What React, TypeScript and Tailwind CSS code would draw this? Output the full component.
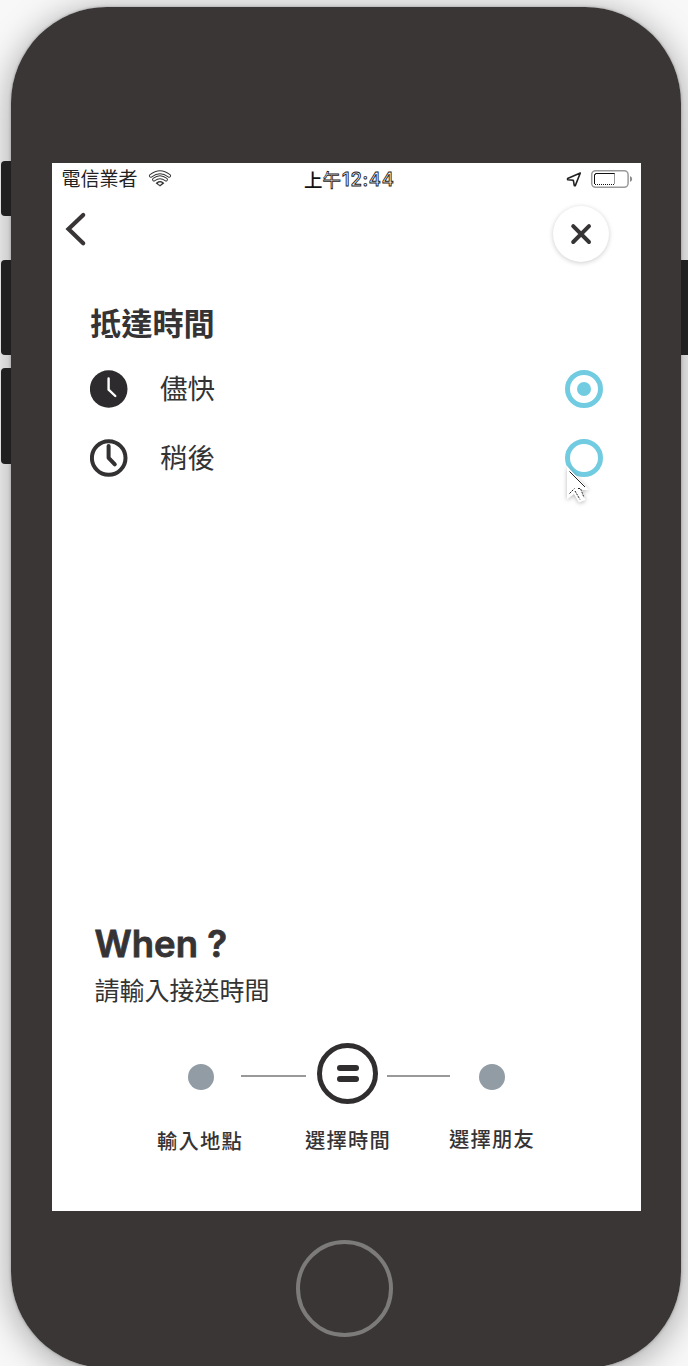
import React from "react";

const keys = [
  "left-[1px] top-[161px] h-[55px] w-[14px] rounded-l-[4px]",
  "left-[1px] top-[260px] h-[95px] w-[14px] rounded-l-[4px]",
  "left-[1px] top-[368px] h-[96px] w-[14px] rounded-l-[4px]",
  "left-[679px] top-[260px] h-[95px] w-[14px] rounded-r-[4px]",
];

function WifiIcon() {
  return (
    <svg className="ml-[10px] h-[18px] w-[24px]" viewBox="0 0 24 18" fill="none" strokeLinecap="round">
      <g stroke="#333" strokeWidth="3.8">
        <path d="M2.9 5.8Q12 -1.4 21.1 5.8" />
        <path d="M6 9.6Q12 5 18 9.6" />
        <path d="M9.4 13.2Q12 11 14.6 13.2L12 15.2Z" strokeWidth="2.2" />
      </g>
      <g stroke="#fff" strokeWidth="1.9">
        <path d="M2.9 5.8Q12 -1.4 21.1 5.8" />
        <path d="M6 9.6Q12 5 18 9.6" />
        <path d="M10.4 13.2Q12 12.2 13.6 13.2L12 14.5Z" strokeWidth="0.8" fill="#fff" />
      </g>
    </svg>
  );
}

function StatusBar() {
  return (
    <div className="flex h-[32px] shrink-0 items-center">
      <div className="flex w-[252px] items-center pl-[9.5px] text-[19px] leading-[32px] text-[#222]">
        <span className="relative -top-px whitespace-nowrap">電信業者</span>
        <WifiIcon />
      </div>
      <div className="flex w-[262px] text-[18.5px] leading-[31px] text-[#111]">
        <span className="font-medium">上</span>
        <span className="text-white [-webkit-text-stroke:0.8px_#222]">午</span>
        <span className="ml-[1px] font-['Inter','Noto_Sans_CJK_TC',sans-serif] font-medium tracking-[0.7px] text-white [-webkit-text-stroke:0.9px_#222]">
          12:44
        </span>
      </div>
      <svg className="h-[18px] w-[18px]" viewBox="0 0 18 18" fill="none" stroke="#222" strokeWidth="1.6" strokeLinejoin="round">
        <path d="M14.3 3L1.6 8.6L1.6 9.7L7.3 10.2L8.3 15.6L9.3 15.6Z" />
      </svg>
      <svg className="ml-[6px] h-[20px] w-[44px]" viewBox="0 0 44 20" fill="none">
        <rect x="1.7" y="1.7" width="36.4" height="16.6" rx="4" stroke="#999" strokeWidth="1.5" />
        <path d="M40 7Q42.2 8 42.2 10T40 13Z" fill="#8b8b8b" />
        <path d="M4.5 15V5.5H5.5V4.5H25" stroke="#111" />
        <path d="M24.5 4.5V15" stroke="#999" />
        <path d="M5 15.5H25" stroke="#111" strokeDasharray="1 1" />
      </svg>
    </div>
  );
}

function NavBar() {
  return (
    <div className="flex h-[78px] shrink-0 items-start justify-between pl-[11px] pr-[32px]">
      <svg className="mt-[15px] h-[38px] w-[25px]" viewBox="0 0 25 38" fill="none" stroke="#393536" strokeWidth="4.2" strokeLinecap="round" strokeLinejoin="miter">
        <path d="M20.2 5L5.5 19L20.2 33.2" />
      </svg>
      <button className="mt-[11px] flex h-[56px] w-[56px] items-center justify-center rounded-full bg-white shadow-[0_1px_5px_rgba(0,0,0,0.2)]">
        <svg className="h-[24px] w-[24px]" viewBox="0 0 24 24" fill="none" stroke="#363435" strokeWidth="4" strokeLinecap="round">
          <path d="M4.2 4.2L20 20M20 4.2L4.2 20" />
        </svg>
      </button>
    </div>
  );
}

function ClockIcon({ filled }: { filled: boolean }) {
  return (
    <svg className="h-[38px] w-[38px] shrink-0" viewBox="0 0 38 38" fill="none" strokeLinecap="round" strokeLinejoin="round">
      {filled ? (
        <>
          <circle cx="18.7" cy="19" r="18.8" fill="#2d2b2d" />
          <path d="M18.6 8.5V19.7L25.3 26" stroke="#fff" strokeWidth="2.4" />
        </>
      ) : (
        <>
          <circle cx="18.7" cy="19" r="16.8" stroke="#333132" strokeWidth="4" />
          <path d="M18.6 7V18.8L24.8 25.3" stroke="#333132" strokeWidth="4" />
        </>
      )}
    </svg>
  );
}

function Option({ label, selected }: { label: string; selected: boolean }) {
  return (
    <div className="flex h-[69px] items-center">
      <ClockIcon filled={selected} />
      <span className="mb-[4px] ml-[32px] flex-1 text-[27.5px] leading-[40px] text-[#333]">{label}</span>
      <span className="flex h-[38px] w-[38px] items-center justify-center rounded-full border-[5px] border-[#72cce1]">
        {selected && <span className="h-[14px] w-[14px] rounded-full bg-[#72cce1]" />}
      </span>
    </div>
  );
}

function Cursor() {
  return (
    <svg className="absolute left-[509px] top-[300px] h-[50px] w-[36px]" viewBox="0 0 36 50" fill="none">
      <path
        className="drop-shadow-[0_1px_2px_rgba(0,0,0,0.28)]"
        d="M6 3V36.5L13 31L18 39.5L24.5 37L21 27H28Z"
        fill="#fff"
      />
      <path d="M8.5 8.5L24 24" stroke="#222" />
      <path d="M8.5 30.5L13.5 25.5M14 28L19 36.5M17 25.5H19.5L23 34.5" stroke="#222" strokeDasharray="2 1" />
    </svg>
  );
}

function Progress() {
  return (
    <div className="mt-[34px] flex h-[64px] items-center pl-[136px]">
      <span className="mt-[5px] h-[26px] w-[26px] rounded-full bg-[#919ca5]" />
      <span className="ml-[27px] mt-[3px] h-[2px] w-[65px] bg-[#999]" />
      <span className="ml-[11px] mb-px flex h-[61px] w-[61px] flex-col items-center justify-center gap-[5px] rounded-full border-[5.5px] border-[#302e2f]">
        <span className="h-[6px] w-[22px] rounded-full bg-[#302e2f]" />
        <span className="h-[6px] w-[22px] rounded-full bg-[#302e2f]" />
      </span>
      <span className="ml-[9px] mt-[3px] h-[2px] w-[63px] bg-[#999]" />
      <span className="ml-[29px] mt-[5px] h-[26px] w-[26px] rounded-full bg-[#919ca5]" />
    </div>
  );
}

export default function App() {
  return (
    <main className="relative h-[1366px] w-[688px] overflow-hidden bg-[#f8f8f8] font-['Noto_Sans_CJK_TC',sans-serif]">
      {keys.map((place) => (
        <span key={place} className={`absolute z-10 bg-[#202020] ${place}`} />
      ))}
      <div className="relative ml-[11px] mt-[7px] w-[670px]">
        <div className="absolute inset-0 rounded-[96px] shadow-[0_0_3px_rgba(0,0,0,0.3),0_5px_36px_rgba(0,0,0,0.36)]" />
        <div className="relative z-20 flex h-[1361px] w-[670px] flex-col items-center rounded-[96px] bg-[#3a3636] pt-[156px]">
          <div className="relative flex h-[1048px] w-[589px] shrink-0 flex-col self-start overflow-hidden bg-white ml-[41px]">
            <StatusBar />
            <NavBar />
            <section className="pl-[38px] pr-[38px]">
              <h1 className="mt-[27px] h-[54px] text-[31.2px] font-bold leading-[44px] text-[#363334]">抵達時間</h1>
              <Option label="儘快" selected />
              <Option label="稍後" selected={false} />
            </section>
            <section className="mt-auto h-[295px] shrink-0">
              <h2 className="pl-[42.5px] font-['Inter',sans-serif] text-[36.5px] font-semibold leading-[56px] text-[#363334] [-webkit-text-stroke:0.8px_#363334] [stroke-linejoin:round]">
                When ?
              </h2>
              <p className="-mt-px h-[37px] pl-[42.5px] text-[25px] leading-[36px] text-[#333]">請輸入接送時間</p>
              <Progress />
              <div className="mt-[17px] flex pl-[105px] text-[20.3px] font-medium leading-[30px] tracking-[1.2px] text-[#363334]">
                <span className="mt-[2px] w-[148px]">輸入地點</span>
                <span className="mt-px w-[144px]">選擇時間</span>
                <span>選擇朋友</span>
              </div>
            </section>
            <Cursor />
          </div>
          <div className="ml-[-3px] mt-[29px] h-[97px] w-[97px] shrink-0 rounded-full border-[4px] border-[#7d7a7a]" />
        </div>
      </div>
    </main>
  );
}
